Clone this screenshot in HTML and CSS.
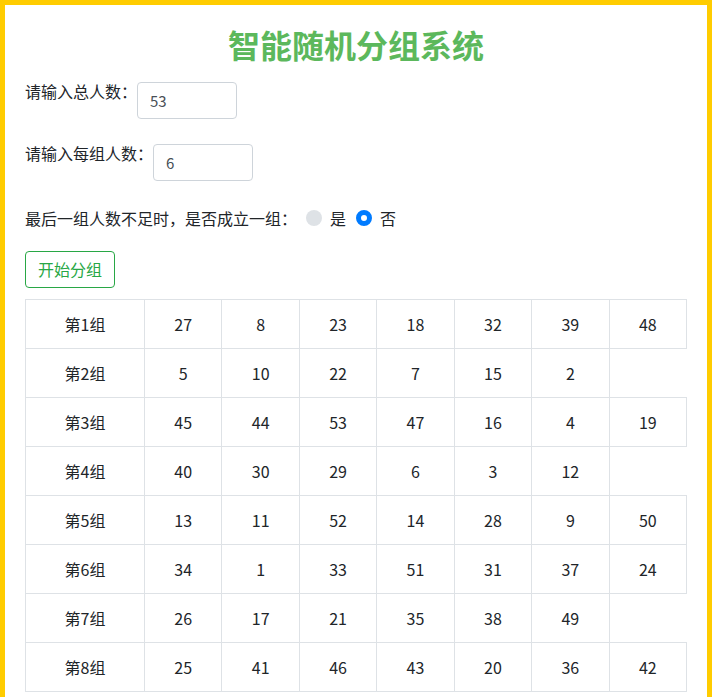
FILE: index.html
```html
<!DOCTYPE html>
<html lang="zh-CN">
<head>
    <meta charset="UTF-8">
    <meta name="viewport" content="width=device-width, initial-scale=1.0">
    <title>智能随机分组系统</title>
    <link rel="stylesheet" href="styles.css">
</head>
<body>
    <div class="container">
        <h1 class="title">智能随机分组系统</h1>

        <!-- 参数输入 -->
        <div class="field">
            <label for="total">请输入总人数：</label>
            <input type="text" id="total" value="53">
        </div>
        <div class="field">
            <label for="perGroup">请输入每组人数：</label>
            <input type="text" id="perGroup" value="6">
        </div>
        <div class="field radio-row">
            <span>最后一组人数不足时，是否成立一组：</span>
            <span class="radio"></span><span class="radio-text">是</span>
            <span class="radio checked"></span><span class="radio-text">否</span>
        </div>

        <button class="btn-start">开始分组</button>

        <!-- 分组结果 -->
        <table class="result-table">
            <tr><td class="name">第1组</td><td>27</td><td>8</td><td>23</td><td>18</td><td>32</td><td>39</td><td>48</td></tr>
            <tr><td class="name">第2组</td><td>5</td><td>10</td><td>22</td><td>7</td><td>15</td><td>2</td></tr>
            <tr><td class="name">第3组</td><td>45</td><td>44</td><td>53</td><td>47</td><td>16</td><td>4</td><td>19</td></tr>
            <tr><td class="name">第4组</td><td>40</td><td>30</td><td>29</td><td>6</td><td>3</td><td>12</td></tr>
            <tr><td class="name">第5组</td><td>13</td><td>11</td><td>52</td><td>14</td><td>28</td><td>9</td><td>50</td></tr>
            <tr><td class="name">第6组</td><td>34</td><td>1</td><td>33</td><td>51</td><td>31</td><td>37</td><td>24</td></tr>
            <tr><td class="name">第7组</td><td>26</td><td>17</td><td>21</td><td>35</td><td>38</td><td>49</td></tr>
            <tr><td class="name">第8组</td><td>25</td><td>41</td><td>46</td><td>43</td><td>20</td><td>36</td><td>42</td></tr>
        </table>
    </div>
</body>
</html>
```

FILE: styles.css
```css
body {
    margin: 0;
    font-family: "Noto Sans CJK SC", "Noto Sans", sans-serif;
    font-size: 16px;
    color: #212529;
    background-color: white;
}
.container {
    border: 5px solid #ffcc00;
    padding: 20px;
    min-height: 700px;
}
.title {
    margin: 0 0 16px;
    font-size: 32px;
    line-height: 38px;
    font-weight: bold;
    text-align: center;
    color: #5cb85c;
}
.field {
    display: flex;
    align-items: flex-start;
    line-height: 24px;
    margin-bottom: 22px;
}
.field input {
    width: 100px;
    height: 37px;
    margin-top: 3px;
    padding: 0 12px;
    box-sizing: border-box;
    border: 1px solid #ced4da;
    border-radius: 4px;
    font-family: inherit;
    font-size: 15px;
    color: #495057;
}
.radio-row {
    align-items: center;
    margin-top: 25px;
    margin-bottom: 21px;
}
.radio {
    width: 16px;
    height: 16px;
    border-radius: 50%;
    background-color: #dee2e6;
    box-sizing: border-box;
    margin: 0 8px 0 9px;
}
.radio-text + .radio {
    margin-left: 10px;
}
.radio.checked {
    background-color: #007bff;
    border: 5px solid #007bff;
    background-color: white;
}
.btn-start {
    display: block;
    padding: 6px 12px;
    line-height: 23px;
    font-family: inherit;
    font-size: 16px;
    color: #28a745;
    background-color: white;
    border: 1px solid #28a745;
    border-radius: 4px;
    cursor: pointer;
    margin-bottom: 11px;
}
.result-table {
    width: 100%;
    border-collapse: collapse;
    table-layout: fixed;
}
.result-table td {
    border: 1px solid #dee2e6;
    padding: 12px;
    line-height: 24px;
    text-align: center;
}
.result-table td.name {
    width: 94px;
}
```
